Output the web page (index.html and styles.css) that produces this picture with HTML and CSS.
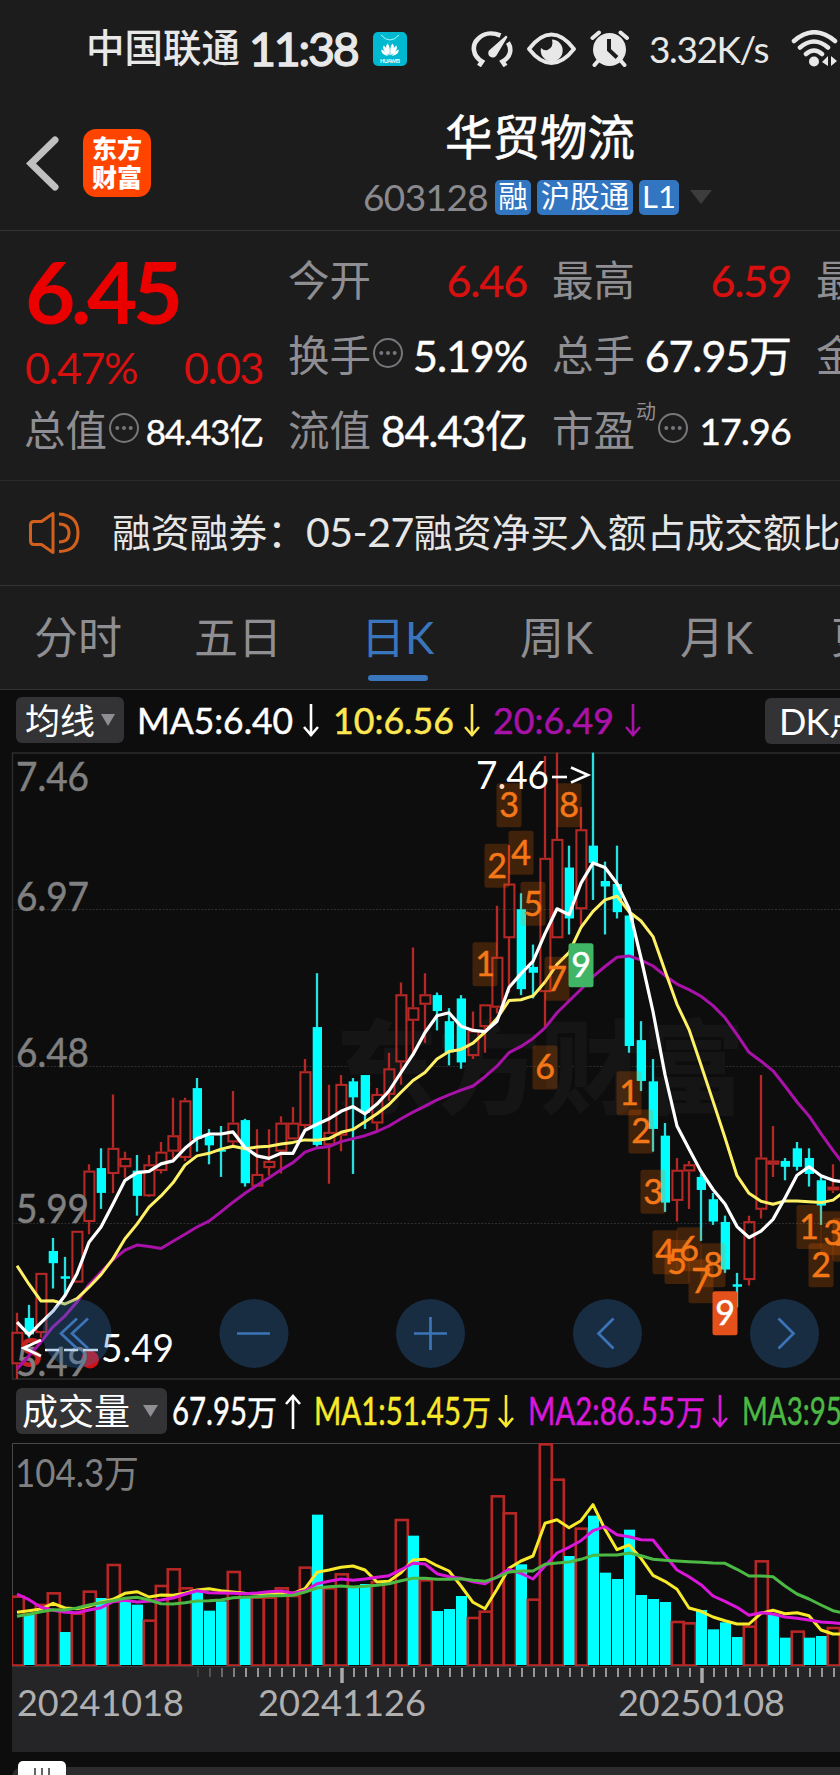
FILE: index.html
```html
<!DOCTYPE html>
<html lang="zh-CN">
<head>
<meta charset="utf-8">
<title>华贸物流 603128</title>
<link rel="stylesheet" href="styles.css">
</head>
<body>
<div class="screen">
  <div class="status">
    <span class="carrier">中国联通</span>
    <span class="clock">11:38</span>
    <svg class="app-badge" viewBox="0 0 34 34">
      <rect width="34" height="34" rx="5" fill="#00b8cf"/>
      <path d="M8 3q9 10 18 0" fill="none" stroke="#bff" stroke-width=".9"/>
      <g fill="#fff">
        <path d="M16.6 23.500Q11 15 14.500 11.500Q17.500 14 16.600 23.500zM17.400 23.500Q23 15 19.500 11.500Q16.500 14 17.400 23.500zM15.800 23.500Q8.500 18 10.500 13.500Q14 15 15.800 23.500zM18.200 23.500Q25.500 18 23.500 13.500Q20 15 18.200 23.500zM15 24Q8 22.500 8.300 17.500Q12 18.500 15 24zM19 24Q26 22.500 25.700 17.500Q22 18.500 19 24z"/>
      </g>
      <text x="7" y="30.500" class="badge-text" textLength="20">HUAWEI</text>
    </svg>
    <div class="status-right">
      <svg class="ic-speed" viewBox="0 0 42 36" fill="none" stroke="#e8e8e8" stroke-width="4.600" stroke-linecap="butt">
        <path d="M8 35L11 30.500C1.500 25 .5 14 7 8C12.500 2 21 1 29.500 4.500M37 11.500C41 18 40 26 31.500 30.500L34.500 35"/>
        <path d="M35 4.500L36.500 6L25.500 24.500A4.300 4.300 0 1 1 18 19.500z" fill="#e8e8e8" stroke="none"/>
      </svg>
      <svg class="ic-eye" viewBox="0 0 49 34">
        <path d="M2 17Q13 2.500 24.500 2.500Q36 2.500 47 17Q36 31 24.500 31Q13 31 2 17z" fill="none" stroke="#e8e8e8" stroke-width="3.800" stroke-linejoin="round"/>
        <path d="M14 16A11 11 0 1 0 25 7.500Q27 15.500 20.500 18Q17 19 14 16z" fill="#e8e8e8"/>
      </svg>
      <svg class="ic-alarm" viewBox="0 0 40 37">
        <circle cx="19.500" cy="19.500" r="16.500" fill="#e8e8e8"/>
        <path d="M2.500 8L9 2.500M30.500 2.500L37 8M8 31L4.500 35M31 31L34.500 35" stroke="#e8e8e8" stroke-width="4" stroke-linecap="round"/>
        <path d="M19 9V20L27 27.500" fill="none" stroke="#1c1c1c" stroke-width="4"/>
      </svg>
      <span class="speed">3.32K/s</span>
      <svg class="ic-wifi" viewBox="0 0 48 37" fill="none" stroke="#e8e8e8" stroke-width="4.500" stroke-linecap="round">
        <path d="M3 11Q23 -6.500 44 11M9 17.500Q23 5.500 37 17.500M15 24Q23 17 31 24"/>
        <circle cx="23" cy="31.500" r="5" fill="#e8e8e8" stroke="none"/>
        <path d="M37 26V36L31 32zM40 36V26L46 31z" fill="#e8e8e8" stroke="none"/>
      </svg>
    </div>
  </div>

  <header class="head">
    <svg class="back" viewBox="0 0 33 56"><path d="M29 4L5 27.500L29 51" fill="none" stroke="#c0c0c0" stroke-width="7" stroke-linecap="round" stroke-linejoin="miter"/></svg>
    <div class="logo"><span>东方</span><span>财富</span></div>
    <div class="title">
      <h1>华贸物流</h1>
      <div class="code-row">
        <span class="code">603128</span>
        <span class="tag t1">融</span><span class="tag t2">沪股通</span><span class="tag t3">L1</span>
        <svg class="drop" viewBox="0 0 22 14"><path d="M0 0H22L11 14z" fill="#3d3d3d"/></svg>
      </div>
    </div>
  </header>

  <section class="quote">
    <div class="col">
      <b class="price">6.45</b>
      <div class="row red chg"><span>0.47%</span><span>0.03</span></div>
      <div class="row"><label>总值</label><svg class="info" viewBox="0 0 30 30"><use href="#dots"/></svg><span class="v small">84.43亿</span></div>
    </div>
    <div class="col">
      <div class="row"><label>今开</label><span class="v red">6.46</span></div>
      <div class="row"><label>换手</label><svg class="info" viewBox="0 0 30 30"><use href="#dots"/></svg><span class="v">5.19%</span></div>
      <div class="row"><label>流值</label><span class="v">84.43亿</span></div>
    </div>
    <div class="col">
      <div class="row"><label>最高</label><span class="v red">6.59</span></div>
      <div class="row"><label>总手</label><span class="v">67.95万</span></div>
      <div class="row"><label>市盈</label><sup>动</sup><svg class="info" viewBox="0 0 30 30"><use href="#dots"/></svg><span class="v mid">17.96</span></div>
    </div>
    <div class="col">
      <div class="row"><label>最低</label></div>
      <div class="row"><label>金额</label></div>
      <div class="row"></div>
    </div>
  </section>
  <svg class="defs"><defs><g id="dots"><circle cx="15" cy="15" r="14" fill="none" stroke="#77777b" stroke-width="2"/><g fill="#77777b"><circle cx="8.300" cy="15" r="2"/><circle cx="15" cy="15" r="2"/><circle cx="21.700" cy="15" r="2"/></g></g></defs></svg>

  <div class="news">
    <svg class="horn" viewBox="0 0 52 44" fill="none" stroke="#d2601c" stroke-width="3">
      <path d="M24 2.500L12.500 10.500H5Q1.500 10.500 1.500 14V30Q1.500 33.500 5 33.500H12.500L24 41.500z" stroke-linejoin="round"/>
      <path d="M30 13Q40 13 40 22Q40 31 30 31M30 3Q49 4 49 22Q49 40 30 40.500"/>
    </svg>
    <span>融资融券：<i>05-27</i>融资净买入额占成交额比</span>
  </div>

  <nav class="tabs">
    <span>分时</span><span>五日</span><span class="on">日K</span><span>周K</span><span>月K</span><span>更多</span>
  </nav>

  <main class="charts">
    <div class="bar ma-bar">
      <div class="pill ma-pill">均线<svg viewBox="0 0 14 12"><path d="M0 0H14L7 12z" fill="#8e8e93"/></svg></div>
      <svg class="ma-text" width="520" height="46" viewBox="130 0 520 46"><g id="maText"></g></svg>
      <div class="pill dk">DK点</div>
    </div>
    <svg id="kline" width="840" height="634" viewBox="0 750 840 634"></svg>
    <div class="bar vol-bar">
      <div class="pill vol-pill">成交量<svg viewBox="0 0 15 12"><path d="M0 0H15L7.500 12z" fill="#8e8e93"/></svg></div>
      <svg class="vol-text" width="669" height="46" viewBox="171 0 669 46"><g id="volText"></g></svg>
    </div>
    <svg id="volume" width="840" height="227" viewBox="0 1440 840 227"></svg>
    <div class="axis"><svg id="axis" width="828" height="85" viewBox="12 1667 828 85"></svg></div>
    <div class="scroll"><div class="track"></div><div class="handle"><i></i><i></i><i></i></div></div>
  </main>
</div>
<script src="chart.js"></script>
</body>
</html>
```
FILE: styles.css
```css
* { box-sizing: border-box; margin: 0; padding: 0; }
body {
  background: #1c1c1c; color: #fff; overflow: hidden;
  font-family: Lato, "Noto Sans CJK SC", sans-serif;
}
svg { display: block; flex: none; }
svg text { font-family: Lato, "Noto Sans CJK SC", sans-serif; }
.screen { width: 840px; height: 1775px; overflow: hidden; display: flex; flex-direction: column; }
.screen > * { flex: none; }
.defs { width: 0; height: 0; }

.status { height: 97px; padding-left: 86px; display: flex; align-items: center; color: #e8e8e8; white-space: nowrap; }
.carrier { font-size: 38.500px; font-weight: 500; line-height: 50px; width: 163px; flex: none; margin-top: -3px; }
.clock { font-size: 46.500px; font-weight: 400; letter-spacing: -2.200px; line-height: 50px; width: 124px; flex: none; margin-top: -2px; -webkit-text-stroke: 1.400px #e8e8e8; }
.app-badge { width: 34px; height: 34px; }
.badge-text { font-size: 5.500px; font-weight: 700; fill: #fff; }
.status-right { display: flex; align-items: center; margin-left: 64px; flex: none; }
.ic-speed { width: 42px; height: 36px; margin-right: 14px; }
.ic-eye { width: 49px; height: 34px; margin-right: 14px; }
.ic-alarm { width: 40px; height: 37px; margin-right: 19px; }
.speed { font-size: 37px; letter-spacing: -1.400px; width: 142px; flex: none; line-height: 40px; }
.ic-wifi { width: 48px; height: 37px; }

.head { height: 134px; border-bottom: 1px solid #343434; display: flex; padding-left: 26px; }
.back { width: 33px; height: 56px; margin-top: 39px; }
.logo {
  width: 68px; height: 68px; margin: 32px 0 0 24px; background: #ff4400; border-radius: 13px;
  display: flex; flex-direction: column; align-items: center; padding-top: 4px;
  font-family: "Noto Sans CJK SC"; font-size: 25px; font-weight: 900; line-height: 29px;
}
.title { margin-left: 212px; width: 352px; }
h1 { font: 400 47.500px/60px "Noto Sans CJK SC", sans-serif; -webkit-text-stroke: .6px #fff; margin: 8px 0 0 82px; white-space: nowrap; }
.code-row { display: flex; height: 36px; margin-top: 14px; align-items: center; white-space: nowrap; }
.code { font-size: 37px; letter-spacing: -.6px; color: #8a8a8e; line-height: 36px; width: 132px; flex: none; margin-top: -1px; }
.tag { background: #3275c0; border-radius: 5px; height: 35px; font: 29.500px/32px Lato, "Noto Sans CJK SC"; text-align: center; margin-right: 6px; flex: none; }
.t1 { width: 36px; }
.t2 { width: 96px; }
.t3 { width: 40px; font-size: 31px; margin-right: 11px; }
.drop { width: 22px; height: 14px; }

.quote { height: 249px; padding: 12px 0 0 25px; display: flex; gap: 26px; overflow: hidden; }
.col { width: 238px; flex: none; }
.row { height: 75px; display: flex; align-items: center; white-space: nowrap; line-height: 60px; }
.row label { font: 41.500px/60px "Noto Sans CJK SC"; color: #8e8e93; margin: -3px 0 3px -1px; }
.info { width: 30px; height: 30px; margin: -5px 0 0 2px; }
.v { margin-left: auto; font-size: 43px; letter-spacing: -1.100px; -webkit-text-stroke: .4px currentColor; }
.small { font-size: 35px; letter-spacing: -1.200px; }
.mid { font-size: 37.500px; letter-spacing: -.8px; }
.red { color: #d81010; }
.price { display: block; height: 99px; font-size: 87px; font-weight: 700; line-height: 96px; letter-spacing: -4.600px; color: #eb0000; }
.chg { height: 51px; font-size: 43px; justify-content: space-between; letter-spacing: -1.500px; }
sup { font: 20px/20px "Noto Sans CJK SC"; color: #8e8e93; align-self: flex-start; margin: 8px 0 0 1px; }
.mid { margin-left: auto; }

.news { height: 106px; border-top: 1px solid #2b2b2b; border-bottom: 1px solid #343434; padding-left: 29px; display: flex; align-items: center; color: #e6e6e6; white-space: nowrap; overflow: hidden; }
.horn { width: 52px; height: 44px; margin: -1px 31px 0 0; }
.news span { font: 38.800px/60px "Noto Sans CJK SC"; margin-top: -6px; }
.news i { font: 41px Lato; letter-spacing: -.5px; }

.tabs { height: 104px; border-bottom: 1px solid #343434; padding-left: 34px; display: flex; overflow: hidden; }
.tabs span { font: 44px/103px Lato, "Noto Sans CJK SC"; color: #8e8e93; white-space: nowrap; flex: none; width: 160px; position: relative; }
.tabs span:nth-child(2) { width: 167px; }
.tabs span:nth-child(3) { width: 159px; }
.tabs span:nth-child(5) { width: 151px; }
.tabs .on { color: #3a76bd; }
.on::after { content: ""; position: absolute; left: 7px; top: 89px; width: 60px; height: 6px; border-radius: 3px; background: #3a76bd; }

.charts { background: #0d0d0d; height: 1086px; }
.bar { display: flex; overflow: hidden; }
.ma-bar { height: 60px; padding: 7px 0 0 16px; }
.vol-bar { height: 56px; padding: 4px 0 0 16px; }
.pill { flex: none; height: 46px; background: #333335; border-radius: 6px; display: flex; align-items: center; font: 35px/44px Lato, "Noto Sans CJK SC"; white-space: nowrap; }
.ma-pill { width: 108px; padding-left: 9px; margin-right: 6px; }
.ma-pill svg { width: 14px; height: 12px; margin-left: 6px; }
.dk { width: 110px; padding-left: 14px; margin-left: 115px; font-size: 36px; letter-spacing: -.8px; margin-top: 1px; }
.vol-pill { width: 151px; padding-left: 6px; margin-right: 4px; font-size: 36px; }
.vol-pill svg { width: 15px; height: 12px; margin-left: 13px; }
#maText text, #volText text { stroke: currentColor; stroke-width: 0; }
.axis { margin-left: 12px; width: 828px; height: 85px; background: #252527; }
.scroll { height: 24px; position: relative; padding: 15px 0 0 12px; overflow: hidden; }
.track { height: 20px; background: #2c2c2e; border-radius: 10px 0 0 0; }
.handle { position: absolute; left: 18px; top: 9px; width: 48px; height: 24px; background: #fff; border-radius: 5px; display: flex; gap: 5px; justify-content: center; padding-top: 7px; }
.handle i { width: 2px; background: #666; }
```
FILE: chart.js
```js
const GREY = '#808080', RED = '#b52825', CYAN = '#00ffff';
const px = i => 17 + 12 * i;
const py = v => 740 + v * 0.42092;
const vy = v => 1380 + v / 3;

// color, wick top, body top, body bottom, wick bottom
const candles = [
'r1361,1406,1483,1518','c1342,1373,1412,1420','r1266,1266,1409,1420','c1183,1214,1243,1303','c1228,1274,1280,1320',
'r1166,1166,1289,1289','r1008,1023,1145,1174','c970,1017,1076,1114','r842,969,1031,1076','r978,993,1015,1040',
'c986,1023,1083,1130','r986,1008,1084,1086','r955,978,1024,1030','r850,939,978,995','r850,856,993,1000',
'c803,827,948,978','c924,940,963,1008','c917,974,978,1038','r834,909,956,965','c900,903,1053,1061',
'r925,1031,1061,1062','r925,1000,1017,1035','r894,909,978,1030','r872,909,949,949','r758,787,917,922',
'c554,682,962,966','r819,931,963,1054','r796,817,940,977','c803,811,849,1031','c796,796,886,924',
'r827,841,911,930','r743,780,843,857','r576,604,766,819','r493,635,667,750','r554,604,629,720',
'c600,606,644,690','c637,668,742,773','c606,614,766,781','r645,690,751,758','r628,628,682,743',
'r394,515,636,650','r250,341,471,600','c364,402,592,606','c486,539,553,614','r38,280,599,682',
'r30,235,471,471','c251,303,424,462','r159,212,402,440','c30,251,292,380','c289,335,348,462',
'c251,342,409,424','c417,417,727,743','c668,713,810,834','c758,811,924,978','c910,940,1099,1121',
'r993,1021,1095,1144','r1000,1008,1025,1114','c1030,1038,1069,1190','c1076,1091,1144,1152','c1130,1145,1258,1266',
'c1266,1293,1299,1348','r1130,1143,1283,1296','r796,992,1116,1137','r917,999,1009,1038','c993,1000,1014,1046',
'c955,970,1014,1023','c970,993,1031,1061','c1038,1046,1106,1152','r1008,1061,1070,1076'];

const ma5 = [1383,1413,1384,1357,1320,1268,1193,1157,1102,1046,1028,1025,1007,1000,970,947,936,936,931,968,988,994,982,982,927,913,900,882,871,888,865,834,790,747,695,655,648,680,690,693,668,588,555,526,460,401,415,340,292,303,341,400,518,645,795,917,972,1025,1068,1102,1156,1182,1167,1139,1088,1034,1014,1035,1046,1050];
const ma10 = [1249,1293,1333,1332,1340,1327,1300,1270,1232,1185,1150,1110,1083,1052,1010,988,982,972,965,971,967,965,960,956,950,951,947,932,925,907,888,866,837,809,790,758,740,735,720,694,662,619,617,608,575,533,505,445,407,380,371,408,430,467,548,628,688,772,858,945,1035,1077,1096,1103,1095,1095,1097,1099,1093,1072];
const ma20 = [1494,1463,1430,1394,1368,1335,1294,1264,1235,1212,1200,1203,1208,1191,1174,1157,1143,1121,1098,1077,1058,1040,1021,1004,979,969,966,954,947,940,930,917,900,884,870,855,843,832,822,800,775,743,728,709,684,648,620,592,562,538,516,513,523,537,560,580,593,609,631,660,700,742,763,786,822,860,893,935,975,1012];

const vols = 'r647 c703 r672 r637 c756 r698 r632 c654 r552 c662 c674 r719 r615 r565 r622 c634 c692 c664 r573 c650 r650 r650 r622 r645 r560 c404 r622 r580 c622 c612 r603 r605 r417 c467 r598 c693 c687 c648 r711 r692 r346 r397 c553 r656 r190 r296 c528 r443 c407 c578 c597 c449 c645 c657 c666 r723 r727 c690 c748 c727 c771 r737 r541 c703 c773 r752 c773 c768 r741'.split(' ');
const vma1 = [697,692,687,670,684,686,678,667,658,640,635,651,645,646,640,630,626,632,636,640,641,641,640,640,626,577,570,562,558,570,606,604,578,540,538,557,573,618,667,686,628,565,543,528,430,419,443,422,374,448,509,495,535,586,604,628,684,694,711,722,732,732,700,691,701,698,707,750,762,762];
const vma2 = [642,659,682,691,697,698,690,683,665,661,666,664,660,654,643,632,638,639,640,641,639,635,633,640,632,611,604,597,601,597,592,587,569,550,552,581,590,595,605,611,590,568,580,597,558,519,502,482,452,440,464,470,479,480,526,570,590,614,648,664,682,706,698,702,711,715,720,726,728,732];
const vma3 = [709,703,695,689,690,684,675,668,662,655,652,660,671,672,668,663,662,660,653,652,650,647,647,646,636,624,620,618,621,619,616,611,602,595,595,598,598,596,601,604,592,576,573,573,553,549,546,538,526,525,525,519,527,538,541,543,545,547,549,550,568,588,588,590,618,642,657,675,692,700];

const line = (data, y, color, w) => `<polyline points="${data.map((v, i) => px(i) + ',' + y(v).toFixed(1)).join(' ')}" fill="none" stroke="${color}" stroke-width="${w}" stroke-linejoin="round"/>`;
const label = (s, x, y, size, len, color, extra = '') => `<text x="${x}" y="${y}" font-size="${size}" textLength="${len}" lengthAdjust="spacingAndGlyphs" fill="${color}" ${extra}>${s}</text>`;
const caption = (s, x, size, len, color) => label(s, x, 37, size, len, color, `style="stroke:${color};stroke-width:.5"`);
const arrow = (x, color, up) => `<path d="${up ? `M${x} 41V8M${x - 7} 16L${x} 8L${x + 7} 16` : `M${x} 7V39M${x - 7} 30L${x} 38L${x + 7} 30`}" fill="none" stroke="${color}" stroke-width="2.600"/>`;

// ---- price chart ----
let k = '<path d="M12.500 1379V753H840M12 1379H840" fill="none" stroke="#2c2c2c" stroke-width="1.500"/>';
[909.5, 1066.5, 1223.5].forEach(y => k += `<path d="M12 ${y}H840" stroke="#2e2e2e" stroke-dasharray="2 1.500"/>`);
k += label('东方财富', 335, 1106, 102, 410, '#151515', 'font-weight="900"');
const axisLabels = [['7.46', 791], ['6.97', 910.5], ['6.48', 1067], ['5.99', 1223], ['5.49', 1375.5]];
candles.forEach((c, i) => {
  const [a, b, d, e] = c.slice(1).split(',').map(v => py(+v)), x = px(i);
  if (c[0] === 'c') {
    k += `<path d="M${x} ${a}V${e}" stroke="#29e0e0" stroke-width="2.300"/><rect x="${x - 4.3}" y="${b}" width="9.300" height="${d - b}" fill="${CYAN}"/>`;
  } else {
    k += `<path d="M${x} ${a}V${b}M${x} ${d}V${e}" stroke="${RED}" stroke-width="2.300"/><rect x="${x - 4.6}" y="${b + 1}" width="10" height="${Math.max(d - b - 2, 1)}" fill="none" stroke="${RED}" stroke-width="2.100"/>`;
  }
});
k += label('S', 19, 1367, 40, 23, '#c62222', 'font-weight="700"');
k += '<circle cx="90" cy="1359.500" r="9" fill="#d40f14"/>';
axisLabels.forEach(([s, y]) => k += label(s, 16, y, 40, 73, GREY, `stroke="${GREY}" stroke-width=".5"`));
k += line(ma20, py, '#a812a8', 3) + line(ma10, py, '#fff166', 3) + line(ma5, py, '#fff', 3.2);
k += label('7.46', 476, 789, 39, 73, '#fff') + '<path d="M552 777H567" stroke="#fff" stroke-width="2.600"/><path d="M571 767.500L588 775L571 782.500" fill="none" stroke="#fff" stroke-width="2.600"/>';
k += label('5.49', 101, 1362, 39, 73, '#fff') + '<path d="M45 1350H59M64 1350H78M83 1350H98" stroke="#fff" stroke-width="2.600"/><path d="M41 1340L24 1348L41 1356" fill="none" stroke="#fff" stroke-width="3"/>';
const marks = [[39,533,1],[40,299,2],[41,155,3],[42,268,4],[43,389,5],[44,778,6],[45,567,7],[46,155,8],[47,535,9,'#40b566'],
  [51,839,1],[52,930,2],[53,1073,3],[54,1217,4],[55,1240,5],[56,1210,6],[57,1286,7],[58,1248,8],[59,1362,9,'#e5511a'],
  [66,1157,1],[67,1248,2],[68,1172,3],[69,1187,4]];
marks.forEach(([i, v, n, bg]) => {
  const x = px(i), y = py(v), ink = bg ? '#fff' : '#f47718';
  k += `<rect x="${x - 12.5}" y="${y - 22}" width="25" height="44" rx="2.500" fill="${bg || 'rgba(255,110,0,.21)'}"/><text x="${x}" y="${y + 12}" font-size="34" text-anchor="middle" fill="${ink}" stroke="${ink}" stroke-width=".5">${n}</text>`;
});
[77, 254, 430.5, 607.5, 784.5].forEach((x, n) => {
  const y = 1333.5;
  const icon = [
    `M${x} ${y - 15}L${x - 16} ${y}L${x} ${y + 15}M${x + 11} ${y - 15}L${x - 5} ${y}L${x + 11} ${y + 15}`,
    `M${x - 17} ${y}H${x + 16}`,
    `M${x - 16.5} ${y}H${x + 16.5}M${x} ${y - 16.5}V${y + 16.5}`,
    `M${x + 6} ${y - 15}L${x - 9} ${y}L${x + 6} ${y + 15}`,
    `M${x - 6} ${y - 15}L${x + 9} ${y}L${x - 6} ${y + 15}`][n];
  k += `<circle cx="${x}" cy="${y}" r="34.500" fill="rgba(50,115,190,.3)"/><path d="${icon}" fill="none" stroke="#3b75b8" stroke-width="2.700"/>`;
});
document.getElementById('kline').innerHTML = k;

// ---- volume chart ----
let v = '<clipPath id="plot"><path d="M12 1443H840V1667H12z"/></clipPath><path d="M12.500 1667V1443.500H840" fill="none" stroke="#484848"/><g clip-path="url(#plot)">';
vols.forEach((s, i) => {
  const x = px(i) + .5, y = vy(+s.slice(1));
  v += s[0] === 'c' ? `<rect x="${x - 5.5}" y="${y}" width="11" height="${1665 - y}" fill="${CYAN}"/>`
    : `<rect x="${x - 5.7}" y="${y + 1}" width="12" height="${1664.5 - y}" fill="none" stroke="#b82726" stroke-width="2.600"/>`;
});
v += '</g>' + label('104.3万', 15, 1487, 38, 124, GREY);
v += line(vma1, vy, '#f9e92b', 3) + line(vma2, vy, '#d916d9', 3) + line(vma3, vy, '#4cb944', 3);
v += '<path d="M12 1666.500H840" stroke="#3c3c3c"/>';
document.getElementById('volume').innerHTML = v;

// ---- time axis ----
let t = '';
for (let i = 15; i < 69; i++) {
  const big = i === 27 || i === 57, fade = Math.min(1, (i - 14) / 5);
  t += `<path d="M${px(i) + 1} 1668V${big ? 1683 : 1677}" stroke="#aaa" stroke-opacity="${big ? 1 : fade * .85}" stroke-width="${big ? 3.5 : 2}"/>`;
}
t += label('20241018', 17, 1716, 37.5, 167, '#b0b0b0') + label('20241126', 258, 1716, 37.5, 168, '#b0b0b0') + label('20250108', 618, 1716, 37.5, 167, '#b0b0b0');
document.getElementById('axis').innerHTML = t;

// ---- indicator captions ----
document.getElementById('maText').innerHTML =
  caption('MA5:6.40', 137, 37, 156, '#fff') + arrow(311, '#fff') +
  caption('10:6.56', 333, 37, 121, '#fde752') + arrow(472, '#fde752') +
  caption('20:6.49', 493, 37, 121, '#a812a8') + arrow(633, '#a812a8');
document.getElementById('volText').innerHTML =
  caption('67.95', 172, 39, 75, '#fff') + caption('万', 247, 34, 30, '#fff') + arrow(293, '#fff', true) +
  caption('MA1:51.45', 314, 39, 147, '#f9e92b') + caption('万', 462, 34, 29, '#f9e92b') + arrow(506, '#f9e92b') +
  caption('MA2:86.55', 528, 39, 147, '#d916d9') + caption('万', 676, 34, 29, '#d916d9') + arrow(720, '#d916d9') +
  caption('MA3:95', 742, 39, 100, '#4cb944');
```
